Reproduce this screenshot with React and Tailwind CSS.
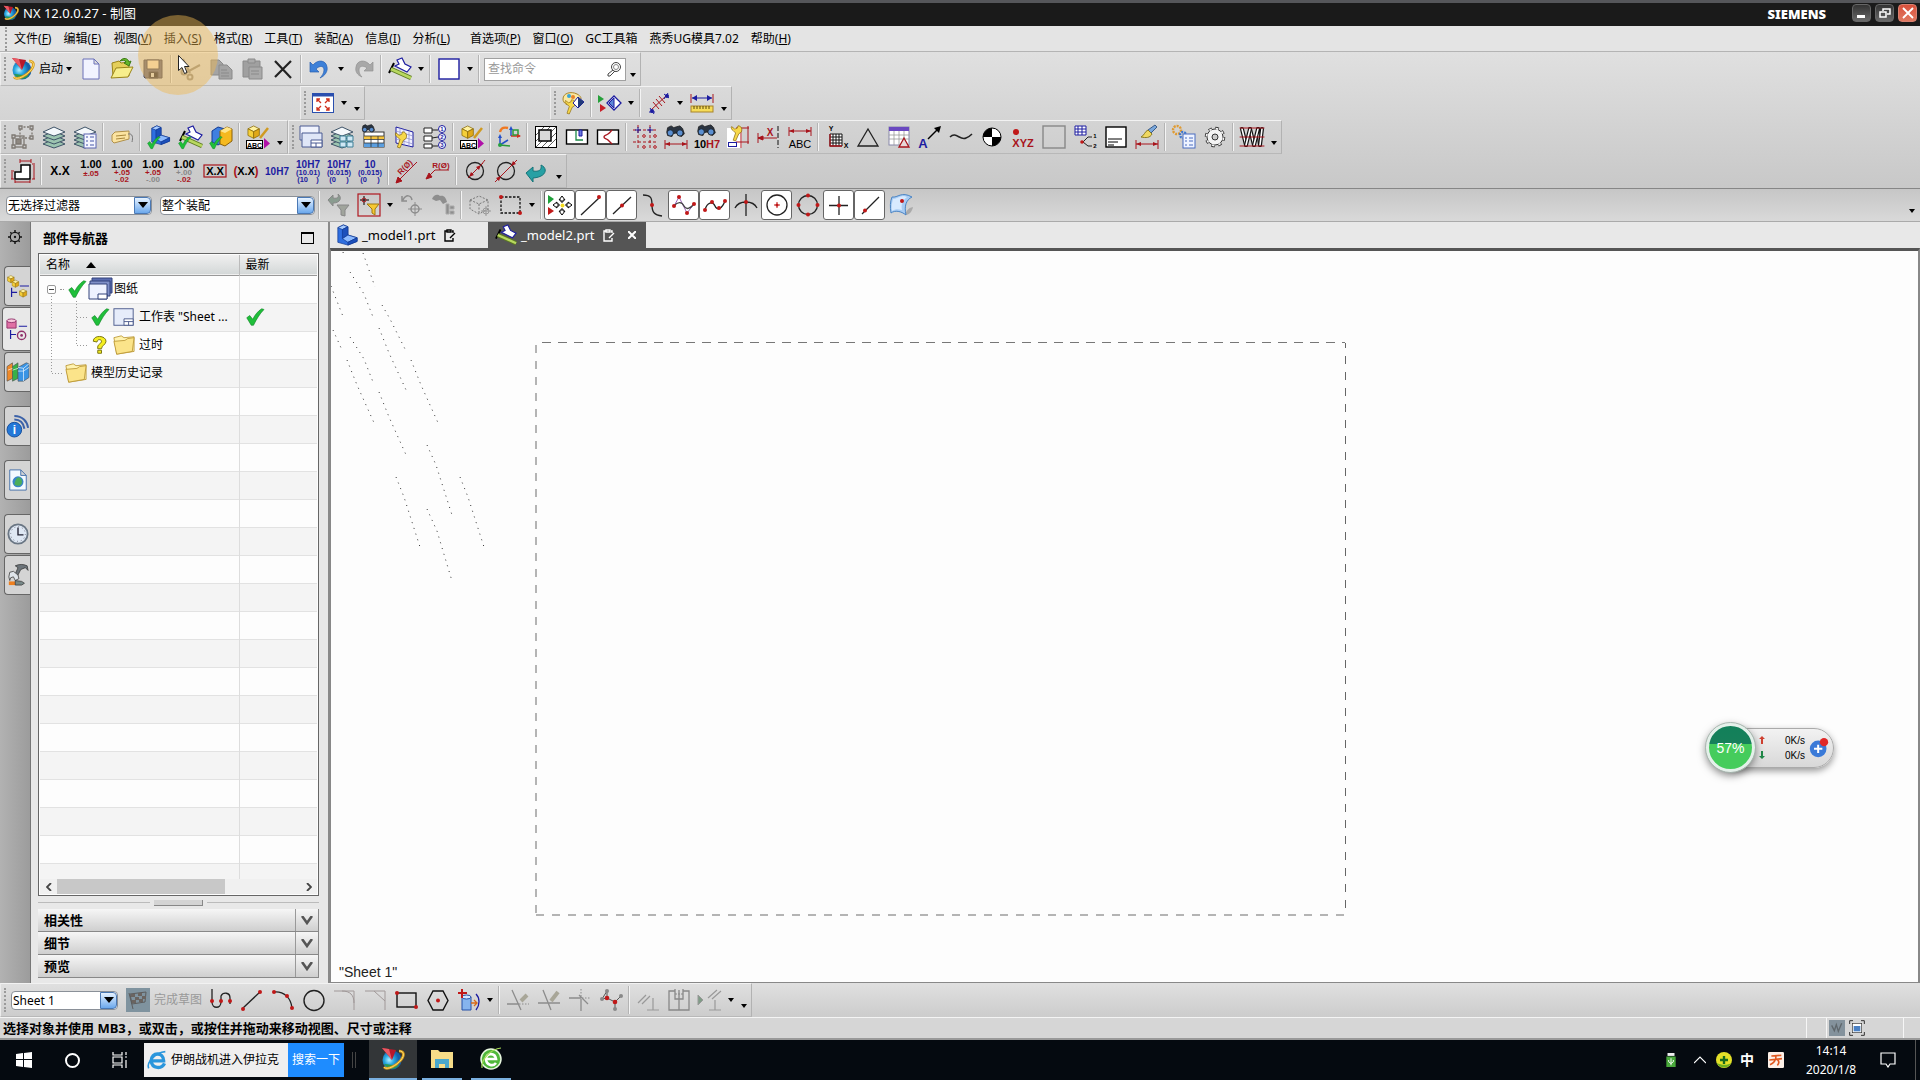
const RED = '#a8141c'
const BLUE = '#1c1ca0'

const Dot = ({ x, y, r = 2, c = '#c01818' }) => <circle cx={x} cy={y} r={r} fill={c} stroke="none" />

const T = ({ x = 12, y, s = 10, c = '#000', a = 'middle', w = 700, children }) => (
  <text x={x} y={y} fontSize={s} fontWeight={w} fill={c} stroke="none" textAnchor={a} fontFamily="Liberation Sans, sans-serif">
    {children}
  </text>
)

const Check = () => <path d="M1 13l4-3 4 5C12 9 16 4 21 1l3 1C18 8 14 15 10 23H7z" fill="#1fbf3a" stroke="#0c7f22" strokeWidth=".8" />

const Layers = () => (
  <g fill="#f4f8fb" stroke="#3f5468">
    {[19, 15, 11, 7].map((y) => (
      <path key={y} d={`M1 ${y}L12 ${y - 5}L23 ${y}L12 ${y + 4}Z`} fill={y > 7 ? '#9cc4b0' : '#f4f8fb'} />
    ))}
  </g>
)

const Sketch = () => (
  <g strokeWidth="1.2">
    <path d="M9 3l5-2 3 6 6 3-4 5L7 9l4-2z" fill="#fff" stroke={BLUE} />
    <path d="M6 6L1 16" stroke="#000" strokeWidth="2" />
    <path d="M3 12l20 9" stroke="#5d7a22" strokeWidth="4.5" />
    <path d="M3 12l20 9" stroke="#b8d860" strokeWidth="2.5" />
  </g>
)

const Block = () => (
  <g strokeWidth=".8" stroke="#123a94">
    <path d="M2 4l6-3 5 2v9l10 3v4l-10 4-11-3z" fill="#2f6fe0" />
    <path d="M2 4l6-3 5 2-6 3z" fill="#a8ccff" />
    <path d="M7 6l6-3v9l-6 4z" fill="#1c50bc" />
    <path d="M7 16l6-4 10 3-10 5z" fill="#8cbaff" />
    <path d="M13 20l10-5v4l-10 4z" fill="#1c50bc" />
  </g>
)

const Cube = ({ x = 0, y = 0, k = 1 }) => (
  <g transform={`translate(${x} ${y}) scale(${k})`} stroke="#8a6a08" strokeWidth=".8">
    <path d="M1 4l6-3 6 3-6 3z" fill="#fff2a0" />
    <path d="M1 4v7l6 3V7z" fill="#f5cf3a" />
    <path d="M13 4v7l-6 3V7z" fill="#e0a818" />
  </g>
)

const Binoculars = () => (
  <g stroke="#111" strokeWidth=".8">
    <path d="M3 3l4-2 3 2 3-1 4-1 3 3 2 6-3 3-4-1-2-3-4 1-1 3-5-1-1-4z" fill="#2b3440" />
    <ellipse cx="6" cy="9" rx="3.5" ry="3.5" fill="#5b8fd0" />
    <ellipse cx="17" cy="9" rx="3.5" ry="3.5" fill="#5b8fd0" />
  </g>
)

const HDim = ({ y = 18 }) => (
  <g stroke={RED} fill={RED}>
    <path d={`M1 ${y - 4}v9M23 ${y - 4}v9M1 ${y}H23`} />
    <path d={`M1 ${y}l5-2v4zM23 ${y}l-5-2v4z`} stroke="none" />
  </g>
)

const Wrench = ({ x = 0, y = 0, k = 1 }) => (
  <path
    transform={`translate(${x} ${y}) scale(${k})`}
    d="M2 2l4 3 3-1 1-3c4 0 6 4 4 8l-3 2-4 9-3-1 3-9-3-3c-2-1-3-3-2-5z"
    fill="#f7d84a"
    stroke="#8a6a10"
    strokeWidth=".9"
  />
)

const Folder = () => (
  <g stroke="#b89430" strokeWidth=".9">
    <path d="M1 4l8-2 3 2 11-1v16L4 22z" fill="#fff3b0" />
    <path d="M1 8l12-1 3-2 7-1-2 15-17 3z" fill="#fbe48a" />
  </g>
)

const SheetIcon = () => (
  <g stroke="#48588a">
    <rect x="1" y="3" width="21" height="18" fill="#e6ecfa" />
    <path d="M12 21v-7h10v7zM12 17h10M17 17v4" fill="#fff" />
  </g>
)

const NxLogo = () => (
  <g stroke="none">
    <circle cx="11" cy="13" r="9.5" fill="url(#globe)" />
    <path d="M3 17c4 6 12 6 15 1-5 1-9-1-15-1z" fill="#2a9a50" />
    <path d="M1 1l14 2-4 10z" fill="#b8182a" />
    <path d="M1 1l7 1 3 11z" fill="#ea5a64" />
    <path d="M18 4c5 0 6 4 2 9S6 24 3 20" stroke="#d89a18" strokeWidth="2.6" />
    <path d="M18 4c5 0 6 4 2 9S6 24 3 20" stroke="#f8dc70" strokeWidth="1" />
  </g>
)

const Search360 = () => (
  <g>
    <circle cx="12" cy="12" r="10" fill="#4fb83a" stroke="#e8f8e0" strokeWidth="1.5" />
    <path d="M17 16c-3 4-10 2-10-4s9-7 10 0H8" stroke="#fff" strokeWidth="2.6" />
    <path d="M3 21C2 12 12 2 22 1" stroke="#a9dc5a" strokeWidth="1.2" />
  </g>
)

const Tol = ({ a, b, ca = RED, cb = RED }) => (
  <>
    <T y={9} s={11}>1.00</T>
    <T y={b ? 16 : 17} s={8} c={ca}>{a}</T>
    {b && <T y={23} s={8} c={cb}>{b}</T>}
  </>
)

const icons = {
  new: <path d="M4 2h11l5 5v15H4zM15 2v5h5" fill="#f1f3ff" stroke="#6a70b8" />,
  open: (
    <g stroke="#9a8418">
      <path d="M2 6l7-2 2 2 8-1v14H3z" fill="#e5cf5a" />
      <path d="M1 21l5-10 17-1-5 10z" fill="#f7ee8c" />
      <path d="M10 4c3-4 8-3 9 1l2-1-2 5-5-3 2-1c-1-2-3-2-6-1z" fill="#63b52a" stroke="#3c7a14" />
    </g>
  ),
  save: (
    <g stroke="#4a4a60">
      <path d="M3 3h18v18H4l-1-1z" fill="#6c6c86" />
      <path d="M6 3h12v9H6z" fill="#f7e3c8" />
      <path d="M8 15h9v6H8z" fill="#333344" />
      <path d="M10 16h3v4h-3z" fill="#ddd" stroke="none" />
    </g>
  ),
  cut: (
    <g stroke="#98938a" strokeWidth="2">
      <path d="M5 2l7 14M22 8L9 15" />
      <circle cx="12" cy="20" r="2.5" />
      <circle cx="6" cy="15" r="2.5" />
    </g>
  ),
  copy: (
    <g fill="#a4a4a4" stroke="#8a8a8a">
      <path d="M2 3h8l4 4v11H2z" />
      <path d="M10 8h8l5 5v9H10zM12 13h6M12 16h8M12 19h8" />
    </g>
  ),
  paste: (
    <g fill="#a0a0a0" stroke="#8a8a8a">
      <path d="M3 4h17v16H3z" />
      <path d="M8 2h7v4H8zM9 10h13v12H9zM11 14h8M11 17h8" fill="#aaa" />
    </g>
  ),
  delete: <path d="M4 4l16 17M20 4L4 20" stroke="#222" strokeWidth="2.2" />,
  undo: <path d="M2 5v10h9l-3-3c4-4 8-3 8 1 0 3-2 6-4 8 5-2 8-7 7-11C18 3 10 2 5 8z" fill="#3d80d8" stroke="#2a60b0" strokeWidth=".7" />,
  redo: <path d="M22 5v9h-9l3-3c-4-3-8-2-8 2 0 3 1 5 3 7-5-2-7-6-6-10C6 3 14 2 19 8z" fill="#a8a8a8" stroke="#929292" strokeWidth=".7" />,
  sketch: <Sketch />,
  view: <rect x="2" y="2" width="20" height="20" fill="#fff" stroke={BLUE} strokeWidth="1.4" />,
  fit: (
    <g>
      <rect x="1.5" y="2.5" width="21" height="19" fill="#fff" stroke="#2a4fae" />
      <path d="M2 4h20" stroke="#2a4fae" strokeWidth="3" />
      <path d="M10 12L6 8m0 3V8h3M14 12l4-4m-3 0h3v3M10 15l-4 4m0-3v3h3M14 15l4 4m0-3v3h-3" stroke="#d0301c" strokeWidth="1.3" />
    </g>
  ),
  palette: (
    <g>
      <path d="M2 8C2 2 10 0 16 3c4 2 5 5 3 6l-5 1-2 4C6 15 2 12 2 8z" fill="#fbe9a0" stroke="#a8842a" />
      <Dot x={8} y={5} c="#39a4d8" />
      <Dot x={12} y={6} c="#e8822a" />
      <Wrench x={3} y={8} k={0.75} />
      <path d="M12 12l5-6 6 5-6 6z" fill="#fff" stroke={BLUE} />
      <path d="M17 6l6 5-6 6z" fill="#223a7a" />
    </g>
  ),
  section: (
    <g>
      <path d="M0 4l6 4-6 4z" fill="#26a03a" />
      <path d="M2 13l6 4-6 4z" fill="#c81e28" />
      <path d="M9 12l7-7 7 7-7 7z" fill="#fff" stroke={BLUE} strokeWidth="1.300" />
      <path d="M16 7v10l-5-5z" fill="#5c86d6" stroke={BLUE} />
    </g>
  ),
  centerline: (
    <g>
      <path d="M4 19L20 4" stroke={RED} />
      <path d="M6 11l6 7M9 8l6 7M12 5l6 7" stroke={RED} />
      <path d="M2 21h6M3 17l4 6M17 3l5 4M17 8l4-6" stroke={BLUE} />
      <Dot x={5} y={20} c={BLUE} />
      <Dot x={20} y={5} c={BLUE} />
    </g>
  ),
  measure: (
    <g>
      <path d="M1 3v9M23 3v9" stroke={RED} />
      <path d="M2 7h20" stroke={BLUE} />
      <path d="M2 7l5-3v6zM22 7l-5-3v6z" fill={BLUE} />
      <rect x="1" y="15" width="22" height="6" fill="#f6dc58" stroke="#a8842a" />
      <path d="M4 15v3M7 15v3M10 15v3M13 15v3M16 15v3M19 15v3" stroke="#5a4608" />
    </g>
  ),
  group: (
    <g stroke="#7d7872" strokeWidth="1.300">
      <rect x="9" y="2" width="12" height="11" strokeDasharray="2 1.5" />
      <rect x="2" y="11" width="11" height="11" />
      <path d="M5 14h5v5H5z" fill="#8d8780" />
      <path d="M8 1h3v3H8zM19 1h3v3h-3zM19 11h3v3h-3zM1 10h3v3H1zM1 20h3v3H1zM12 20h3v3h-3z" fill="#ccc" />
    </g>
  ),
  layers: <Layers />,
  layerlist: (
    <g>
      <Layers />
      <rect x="11" y="9" width="12" height="14" fill="#f4f6ff" stroke="#5a64b0" />
      <path d="M13 12h2M17 12h4M13 16h2M17 16h4M13 20h2M17 20h4" stroke="#4455a8" />
    </g>
  ),
  tag: (
    <g>
      <path d="M2 10l3-3 14-1v8L4 18l-2-2z" fill="#fbe3a0" stroke="#b0904a" />
      <path d="M6 11l10-1M6 14l9-1" stroke="#a8863a" />
      <path d="M18 9c5-1 5 4 4 8" stroke="#777" />
    </g>
  ),
  modeling: (
    <g>
      <g transform="translate(3 0) scale(.85)"><Block /></g>
      <g transform="translate(0 11) scale(.55)"><Check /></g>
    </g>
  ),
  drafting: (
    <g>
      <g transform="translate(1 0)"><Sketch /></g>
      <g transform="translate(0 11) scale(.55)"><Check /></g>
    </g>
  ),
  assembly: (
    <g>
      <path d="M3 6l6-4 7 2v12l-7 4-6-3z" fill="#3f7fe0" stroke="#123a94" />
      <path d="M11 6l7-4 5 2v12l-7 5-5-2z" fill="#f5b91f" stroke="#8a6008" />
      <path d="M11 6l7-4 5 2-7 4z" fill="#ffe58a" />
      <g transform="translate(0 11) scale(.55)"><Check /></g>
    </g>
  ),
  pmi: (
    <g>
      <Cube x={1} y={0} k={0.95} />
      <path d="M22 3L14 13" stroke="#d09a20" strokeWidth="2.5" />
      <rect x="0.5" y="15.500" width="16" height="8" fill="#fff" stroke="#000" />
      <T x={8.5} y={22.5} s={7}>ABC</T>
      <path d="M18 13l6 5.500-6 5z" fill="#b010a8" />
    </g>
  ),
  sheet: (
    <g stroke="#4a5a92">
      <path d="M1 1h19v14H1z" fill="#f0f3fd" />
      <path d="M3 8h20v14H3z" fill="#dfe6f7" />
      <path d="M12 22v-7h11v7zM12 18h11M17 18v4" fill="#fff" />
    </g>
  ),
  viewlayers: (
    <g>
      <Layers />
      <path d="M10 11h6v5h-6zM17 11h6v5h-6zM10 17h6v5h-6zM17 17h6v5h-6z" fill="#cfe8f4" stroke="#3f8098" />
    </g>
  ),
  findtable: (
    <g>
      <rect x="3" y="7" width="20" height="15" fill="#fff" stroke="#333" />
      <path d="M3 11h20v3H3z" fill="#f4c23a" />
      <path d="M3 18h20v4H3z" fill="#5b9fe0" />
      <path d="M3 11h20M3 14.500h20M3 18h20M10 11v11M17 11v11" stroke="#333" strokeWidth=".8" />
      <g transform="translate(0 -1) scale(.62)"><Binoculars /></g>
    </g>
  ),
  gridwrench: (
    <g>
      <path d="M4 2l17 5v15L4 18z" fill="#f1f1ff" stroke={BLUE} />
      <path d="M4 6l17 5M4 10l17 5M4 14l17 5M8 3v16M12 4v17M17 6v16" stroke="#8888cc" strokeWidth=".7" />
      <Wrench x={2} y={6} k={0.85} />
    </g>
  ),
  balloonlist: (
    <g stroke="#222">
      <path d="M1 3h8v5H1zM1 11h8v5H1zM1 19h8v4H1zM9 5h6M9 13l6-1M9 21h6" fill="#fff" />
      <g fill="#fff" stroke={BLUE}>
        <circle cx="19" cy="4" r="3.500" />
        <circle cx="19" cy="12" r="3.500" />
        <circle cx="19" cy="20" r="3.500" />
      </g>
      <T x={19} y={6} s={6} c={BLUE}>1</T>
      <T x={19} y={14} s={6} c={BLUE}>2</T>
      <T x={19} y={22} s={6} c={BLUE}>3</T>
    </g>
  ),
  orient: (
    <g strokeWidth="1.5">
      <path d="M3 20V11M3 20l8-5" stroke="#2450c8" />
      <path d="M3 20l10 1" stroke="#2a9a3a" />
      <path d="M14 3v8" stroke="#2450c8" />
      <path d="M14 11h9" stroke="#d03020" />
      <path d="M16 5h5v5h-5z" stroke="#2a9a3a" />
      <path d="M3 7c1-4 4-5 8-4" stroke="#f07820" strokeWidth="2.4" />
      <path d="M14 1l-2 4h4zM3 9l-2 4h4z" fill="#2450c8" stroke="none" />
      <path d="M24 11l-4-2v4z" fill="#d03020" stroke="none" />
      <Dot x={3} y={20} c="#28a040" />
    </g>
  ),
  hatch: (
    <g stroke="#000">
      <rect x="1.500" y="1.500" width="21" height="21" fill="#fff" />
      <path d="M2 10l8-8M2 16L16 2M2 22L22 2M8 22L22 8M14 22l8-8" stroke="#333" strokeWidth=".8" />
      <rect x="5" y="5" width="12" height="11" fill="#d8d8d8" strokeWidth="1.500" />
    </g>
  ),
  breakout: (
    <g>
      <rect x="1.500" y="5" width="21" height="14" fill="#fff" stroke="#000" strokeWidth="1.400" />
      <path d="M11 5v10h7" stroke="#1c8a48" strokeWidth="1.300" />
      <path d="M14 5h3v6h-3z" fill="#6a78e0" stroke={BLUE} />
    </g>
  ),
  breakview: (
    <g>
      <rect x="1.500" y="5" width="21" height="14" fill="#fff" stroke="#000" strokeWidth="1.400" />
      <path d="M16 5c-2 2-1 2-4 4s-4 1-4 3 2 1 4 3 2 2 4 4" stroke={RED} strokeWidth="1.400" />
    </g>
  ),
  centermarks: (
    <g stroke={RED}>
      <path d="M5 0v24M17 0v24M0 5h24M0 17h24" strokeDasharray="3 2" />
      <path d="M5 2v6M17 2v6M2 5h6M14 5h6" stroke={BLUE} />
      <g fill="#e8d8d8">
        <circle cx="11" cy="11" r="1.300" />
        <circle cx="22" cy="11" r="1.300" />
        <circle cx="11" cy="22" r="1.300" />
        <circle cx="22" cy="22" r="1.300" />
      </g>
    </g>
  ),
  finddim: (
    <g>
      <g transform="translate(1 0) scale(.88)"><Binoculars /></g>
      <HDim y={19} />
    </g>
  ),
  findfit: (
    <g>
      <g transform="translate(1 -1) scale(.88)"><Binoculars /></g>
      <T x={-1} y={23} s={11} a="start">10</T>
      <T x={25} y={23} s={11} a="end" c={RED}>H7</T>
    </g>
  ),
  dimwrench: (
    <g>
      <rect x="1" y="3" width="15" height="20" fill="#fff" stroke="none" />
      <path d="M15 3v20M22 1v18M10 3h13M10 17h13" stroke={RED} />
      <rect x="2.5" y="17.5" width="8" height="4" stroke={BLUE} />
      <Wrench x={4} y={0} k={0.8} />
    </g>
  ),
  dimx: (
    <g stroke={RED}>
      <path d="M1 8v10M1 13h19" />
      <path d="M1 13l5-2v4z" fill={RED} />
      <path d="M21 1v22" stroke="#111" strokeDasharray="5 2" />
      <T x={13} y={11} s={10} c={RED}>X</T>
    </g>
  ),
  dimtext: (
    <g>
      <HDim y={6} />
      <T x={12} y={23} s={11} w={400}>ABC</T>
    </g>
  ),
  ordinate: (
    <g>
      <path d="M5 9h12v12H5zM8 9v12M11 9v12M14 9v12M5 12h12M5 15h12M5 18h12" stroke="#111" fill="#fff" />
      <path d="M5 9v12h12" stroke={RED} strokeWidth="1.300" />
      <T x={6} y={6} s={7}>Y</T>
      <T x={21} y={23} s={7}>X</T>
    </g>
  ),
  triangle: <path d="M12 4L22 21H2z" stroke="#222" strokeWidth="1.300" />,
  symboltable: (
    <g>
      <rect x="2" y="2" width="20" height="18" fill="#fff" stroke="#8888aa" />
      <path d="M2 4h20" stroke="#6a48c0" strokeWidth="4" />
      <path d="M2 10h20M2 14h20M7 6v14M12 6v14M17 6v14" stroke="#999" strokeWidth=".8" />
      <path d="M17 13l5 9H12z" fill="#e8d8d8" stroke={RED} strokeWidth="1.300" />
    </g>
  ),
  note: (
    <g>
      <path d="M10 14L20 4" stroke="#000" strokeWidth="1.500" />
      <path d="M23 1l-2 7-5-5z" fill="#000" />
      <T x={5} y={23} s={13} c={BLUE}>A</T>
    </g>
  ),
  curve: <path d="M1 12c6-6 10 4 16 1 3-1 4-2 6-4" stroke="#222" strokeWidth="1.500" />,
  target: (
    <g>
      <circle cx="12" cy="12" r="9" fill="#fff" stroke="#000" />
      <path d="M12 3a9 9 0 0 0-9 9h9zM12 12h9a9 9 0 0 1-9 9z" fill="#000" />
    </g>
  ),
  xyz: (
    <g>
      <Dot x={5} y={7} r={3} />
      <T x={12} y={22} s={11} c={RED}>XYZ</T>
    </g>
  ),
  frame: <rect x="1" y="1" width="22" height="22" stroke="#888" strokeWidth="1.400" />,
  tableleader: (
    <g>
      <path d="M2 1h11v9H2zM2 4h11M2 7h11M5 1v9M9 1v9" fill="#fff" stroke={BLUE} />
      <path d="M10 17l5-5h4M10 17l5 4h4" stroke="#222" />
      <Dot x={9} y={17} r={1.8} />
      <T x={22} y={13} s={6}>1</T>
      <T x={22} y={23} s={6}>2</T>
    </g>
  ),
  titleblock: (
    <g>
      <rect x="2" y="2" width="20" height="20" fill="#fff" stroke="#000" strokeWidth="1.400" />
      <path d="M4 14h14M4 17h10M4 20h6" stroke="#000" />
    </g>
  ),
  brush: (
    <g>
      <path d="M20 0l2 2-6 6-3-3z" fill="#7aa8dc" stroke="#3c5c88" />
      <path d="M13 5l4 4c-2 4-6 4-11 3 3-1 4-6 7-7z" fill="#f0d860" stroke="#8a7a20" />
      <HDim y={19} />
    </g>
  ),
  gearlist: (
    <g>
      <circle cx="5" cy="5" r="4" stroke="#e09a30" strokeWidth="2.4" strokeDasharray="2 1" />
      <circle cx="11" cy="10" r="3" stroke="#3f78d0" strokeWidth="2.4" strokeDasharray="2 1" />
      <rect x="11" y="9" width="12" height="14" fill="#eef3ff" stroke="#4a6cc0" />
      <path d="M13 13h2M17 13h4M13 16h2M17 16h4M13 20h2M17 20h4" stroke="#4a6cc0" />
    </g>
  ),
  gear: (
    <g stroke="#333">
      <circle cx="12" cy="12" r="8.500" stroke="#333" strokeWidth="3.500" strokeDasharray="3.400 3.280" />
      <circle cx="12" cy="12" r="8" fill="#f4f4f4" />
      <circle cx="12" cy="12" r="8.500" stroke="#f4f4f4" strokeWidth="1.800" strokeDasharray="2.400 4.280" strokeDashoffset="-.5" />
      <circle cx="12" cy="12" r="3" fill="#ccc" />
    </g>
  ),
  spring: (
    <g strokeLinecap="round">
      <path d="M2 4l4 16M10 4l4 16M18 4l2 16" stroke="#111" strokeWidth="4" />
      <path d="M2 4l4 16M10 4l4 16M18 4l2 16" stroke="#fff" strokeWidth="1.600" />
      <path d="M10 4L6 20M18 4l-4 16M22 4l-2 16" stroke="#111" strokeWidth="4" />
      <path d="M10 4L6 20M18 4l-4 16M22 4l-2 16" stroke="#fff" strokeWidth="1.600" />
      <path d="M0 3h24M0 12h24M0 21h24" stroke={RED} />
    </g>
  ),
  shape: (
    <g>
      <path d="M10 6h9v14H4v-7h6z" fill="#fff" stroke="#000" strokeWidth="1.500" />
      <path d="M9 2h11M9 0v4M20 0v4M23 6v14M21 5h3M21 20h3M1 13v7M0 12h3M0 20h3M4 23h15M4 21v3M19 21v3" stroke={RED} />
    </g>
  ),
  xx: <T y={16} s={12}>X.X</T>,
  tol1: <Tol a="±.05" />,
  tol2: <Tol a="+.05" b="-.02" />,
  tol3: <Tol a="+.05" b="-.00" cb="#888" />,
  tol4: <Tol a="+.00" b="-.02" ca="#888" />,
  basic: (
    <g>
      <rect x="1" y="6" width="22" height="12" stroke={RED} strokeWidth="1.200" />
      <T y={16} s={11}>X.X</T>
    </g>
  ),
  ref: (
    <g>
      <T y={16} s={11}>X.X</T>
      <T x={1.5} y={16} s={12} c={RED}>(</T>
      <T x={22.5} y={16} s={12} c={RED}>)</T>
    </g>
  ),
  fit1: <T y={16} s={10} c={BLUE}>10H7</T>,
  fit2: (
    <g>
      <T y={9} s={10} c={BLUE}>10H7</T>
      <T y={16} s={7.5} c={BLUE}>(10.01)</T>
      <T y={23} s={7.5} c={BLUE}>(10 &nbsp; &nbsp;)</T>
    </g>
  ),
  fit3: (
    <g>
      <T y={9} s={10} c={BLUE}>10H7</T>
      <T y={16} s={7.5} c={BLUE}>(0.015)</T>
      <T y={23} s={7.5} c={BLUE}>(0 &nbsp; &nbsp; )</T>
    </g>
  ),
  fit4: (
    <g>
      <T y={9} s={10} c={BLUE}>10</T>
      <T y={16} s={7.5} c={BLUE}>(0.015)</T>
      <T y={23} s={7.5} c={BLUE}>(0 &nbsp; &nbsp; )</T>
    </g>
  ),
  radial1: (
    <g stroke={RED}>
      <path d="M2 23L22 3" />
      <path d="M1 24l2-6 4 4z" fill={RED} />
      <g transform="rotate(-45 9 10)"><T x={11} y={12} s={8} c={RED}>R(Ø)</T></g>
    </g>
  ),
  radial2: (
    <g stroke={RED}>
      <path d="M2 18l7-7h14" />
      <path d="M0 20l3-6 3 4z" fill={RED} />
      <T x={15} y={9} s={8} c={RED}>R(Ø)</T>
    </g>
  ),
  dia1: (
    <g>
      <circle cx="12" cy="12" r="8.500" stroke="#222" strokeWidth="1.300" />
      <path d="M5 19L20 4" stroke={RED} />
      <path d="M18 6l-2 5-3-3zM6 18l5-2-3-3z" fill={RED} />
      <path d="M18 6l4-5" stroke={RED} />
    </g>
  ),
  dia2: (
    <g>
      <circle cx="12" cy="12" r="8.500" stroke="#222" strokeWidth="1.300" />
      <path d="M1 23L23 1" stroke={RED} />
      <path d="M17 7l2-5 3 3zM7 17l-5 2 3 3z" fill={RED} />
    </g>
  ),
  back: <path d="M1 14l7-6v4c6 1 9-1 8-6 7 3 6 12-8 13v4z" fill="#27a0a4" stroke="#147478" />,
  filter1: (
    <g fill="#a0a49c" stroke="#888">
      <path d="M2 7l5-5v3c5 1 6-1 5-4 4 3 3 9-5 9v3z" fill="#8a9c90" />
      <path d="M11 12h12l-4 5v6l-4-1v-5z" />
    </g>
  ),
  filter2: (
    <g>
      <rect x="1" y="1" width="22" height="22" stroke="#b01820" strokeWidth="1.200" />
      <path d="M7 3v9M3 7h9" stroke="#000" />
      <circle cx="7" cy="7" r="2" stroke="#b01820" />
      <path d="M10 11h12l-4 5v6l-3-2v-4z" fill="#f6c832" stroke="#a07a10" />
    </g>
  ),
  undoview: (
    <g stroke="#8c8c8c" strokeWidth="1.500">
      <path d="M2 3v5h5M3 7c3-6 8-5 9 0" />
      <circle cx="15" cy="16" r="4" />
      <path d="M15 9v14M8 16h14" strokeWidth="1" />
    </g>
  ),
  findview: (
    <g fill="#8e8e8e">
      <path d="M1 6c2-5 6-5 8-3 4-1 6 2 7 6l-4 2-3-4-4 1z" />
      <path d="M15 11h3v10h-3zM19 13h4v3h-4zM19 18h4v3h-4z" stroke="#aaa" />
    </g>
  ),
  cubedash: (
    <g stroke="#777">
      <path d="M2 7l9-4 9 4v9l-9 5-9-5zM2 7l9 4 9-4M11 11v10" strokeDasharray="2 1.500" />
      <circle cx="18" cy="18" r="3" stroke="#999" />
      <path d="M18 13v10M13 18h10" stroke="#999" />
    </g>
  ),
  marquee: (
    <g>
      <rect x="2" y="4" width="19" height="16" stroke="#111" strokeWidth="1.300" strokeDasharray="2.500 1.500" />
      <Dot x={2} y={4} />
      <Dot x={21} y={20} />
    </g>
  ),
  snapmove: (
    <g>
      <path d="M0 2l6 4-6 5z" fill="#1fa03a" />
      <path d="M0 14l6 4-6 4z" fill="#c01818" />
      <path d="M14 3l3 4h-2v2h-2V7h-2zM14 22l3-4h-2v-2h-2v2h-2zM5 12l4-3v2h2v2H9v2zM24 12l-4-3v2h-2v2h2v2z" fill="#fff" stroke="#000" />
      <Dot x={14.5} y={12.5} r={2} c="#f4dc20" />
    </g>
  ),
  endpoint: (
    <g>
      <path d="M2 22L20 5" stroke="#222" strokeWidth="1.300" />
      <Dot x={20} y={4} />
    </g>
  ),
  midpoint: (
    <g>
      <path d="M3 21L21 4" stroke="#222" strokeWidth="1.300" />
      <Dot x={12} y={12.5} />
    </g>
  ),
  control: (
    <g>
      <path d="M2 2c8 0 9 3 9 10s2 10 10 11" stroke="#222" strokeWidth="1.300" />
      <Dot x={11} y={12} />
    </g>
  ),
  poles: (
    <g>
      <path d="M2 13L7 4l8 16 7-9" stroke="#9a60b8" />
      <path d="M2 13c4-5 8-4 10 0s6 3 10-2" stroke="#444" strokeWidth="1.300" />
      <Dot x={2} y={13} />
      <Dot x={7} y={4} />
      <Dot x={15} y={20} />
      <Dot x={22} y={11} />
    </g>
  ),
  spline: (
    <g>
      <path d="M2 17c2-8 8-9 10-4s7 3 10-5" stroke="#222" strokeWidth="1.300" />
      <Dot x={2} y={17} />
      <Dot x={9} y={9} />
      <Dot x={16} y={15} />
      <Dot x={22} y={8} />
    </g>
  ),
  intersect: (
    <g>
      <path d="M1 15c4-8 18-8 22 0M12 1v22" stroke="#222" strokeWidth="1.300" />
      <Dot x={12} y={9} />
    </g>
  ),
  arccenter: (
    <g>
      <circle cx="12" cy="12" r="10" stroke="#222" strokeWidth="1.300" />
      <path d="M12 9v6M9 12h6" stroke="#c01818" />
      <Dot x={12} y={12} r={1.500} />
    </g>
  ),
  quadrant: (
    <g>
      <circle cx="12" cy="12" r="9.500" stroke="#222" strokeWidth="1.300" />
      <Dot x={12} y={2.500} />
      <Dot x={12} y={21.500} />
      <Dot x={2.500} y={12} />
      <Dot x={21.500} y={12} />
    </g>
  ),
  point: (
    <g>
      <path d="M12 3v19M2 12.500h19" stroke="#222" strokeWidth="1.300" />
      <Dot x={12} y={12.500} />
    </g>
  ),
  oncurve: (
    <g>
      <path d="M4 21L21 4" stroke="#222" strokeWidth="1.300" />
      <Dot x={7} y={17.500} />
    </g>
  ),
  onface: (
    <g>
      <path d="M16 22c1-4 3-7 8-8-1 5-4 8-8 8z" fill="#aaa" />
      <path d="M3 4C9 5 12-2 23 4c-6 3-8 9-6 18-5-4-11-5-15-2-1-6-1-11 1-16z" fill="#a8ccf4" stroke="#4a84c4" />
      <path d="M4 6c5 0 8-5 14-2-5 4-6 8-5 13-4-1-7-1-10 1-1-4 0-8 1-12z" fill="#d8eaff" />
      <Dot x={13} y={8} />
    </g>
  ),
  profile: (
    <g>
      <path d="M3 1v13c0 7 9 7 9 0V8c2-4 9-4 9 2v6" stroke="#222" strokeWidth="1.300" />
      <Dot x={3} y={13} />
      <Dot x={12} y={13} />
      <Dot x={21} y={13} />
    </g>
  ),
  line: (
    <g>
      <path d="M3 20L20 4" stroke="#222" strokeWidth="1.300" />
      <Dot x={3} y={21} />
      <Dot x={20} y={4} />
    </g>
  ),
  arc: (
    <g>
      <path d="M3 4c10-1 17 6 18 16" stroke="#222" strokeWidth="1.300" />
      <Dot x={3} y={4} />
      <Dot x={16} y={8} />
      <Dot x={21} y={20} />
    </g>
  ),
  circle: <circle cx="12" cy="12.500" r="10" stroke="#222" strokeWidth="1.400" />,
  fillet: <path d="M1 3h20v19M9 3c8 0 12 4 12 12" stroke="#a09898" />,
  chamfer: <path d="M1 3h20v19M10 3l11 10" stroke="#a09898" />,
  rect: (
    <g>
      <rect x="2" y="5" width="19" height="14" stroke="#111" strokeWidth="1.400" />
      <Dot x={2} y={5} />
      <Dot x={21} y={19} />
    </g>
  ),
  polygon: (
    <g>
      <path d="M7 3h10l5 9.500L17 22H7l-5-9.500z" stroke="#111" strokeWidth="1.400" />
      <Dot x={12} y={12.500} />
    </g>
  ),
  pattern: (
    <g>
      <path d="M5 9h9v13H5z" fill="#86b4ee" stroke="#2450a8" />
      <ellipse cx="9.500" cy="9" rx="4.500" ry="2" fill="#d4e6ff" stroke="#2450a8" />
      <path d="M5 1v9M1 5h9" stroke="#c01818" strokeWidth="2" />
      <path d="M19 6c4 4 4 11 0 16" stroke={BLUE} strokeWidth="1.300" />
      <path d="M14 15h6M17 12l3 3-3 3" stroke="#d86a18" strokeWidth="1.300" />
    </g>
  ),
  trim: (
    <g stroke="#8c8c8c">
      <path d="M6 2l9 20M1 16h12" strokeWidth="1.300" />
      <path d="M13 16h10" strokeDasharray="1.500 1.500" />
      <path d="M15 13l6-6" stroke="#a8a698" strokeWidth="4" />
    </g>
  ),
  extend: (
    <g stroke="#8c8c8c">
      <path d="M6 2l8 20M1 15h22" strokeWidth="1.300" />
      <path d="M14 13l7-9" stroke="#a8a698" strokeWidth="4" />
    </g>
  ),
  corner: (
    <g stroke="#8c8c8c">
      <path d="M1 10h12M13 11v12M11 7l9 9" strokeWidth="1.300" />
      <path d="M13 1v9M14 10h9" strokeDasharray="1.500 1.500" />
    </g>
  ),
  movecurve: (
    <g stroke="#555">
      <path d="M3 11l5-8M3 11l5-1 8 4 6-6M16 14v7M8 3v7" />
      <Dot x={8} y={3} c="#888" />
      <Dot x={3} y={11} c="#888" />
      <Dot x={22} y={8} c="#888" />
      <Dot x={16} y={21} c="#888" />
      <Dot x={8} y={10} r={2.3} />
      <Dot x={16} y={14} r={2.3} />
    </g>
  ),
  constraint: <path d="M2 15l8-8M6 16l8-8M17 10v12M11 22h12" stroke="#999" strokeWidth="1.200" />,
  symmetric: (
    <g stroke="#888">
      <path d="M8 3H2v19h20V3h-6M8 1v10h8V1M12 2v20" strokeWidth="1.300" />
      <path d="M8 6h8" strokeDasharray="2 1" />
    </g>
  ),
  autocon: (
    <g stroke="#999">
      <path d="M0 7l5 5-5 5z" fill="#7f9c86" />
      <path d="M10 10l9-8M14 11l9-8M17 12v10M11 22h12" strokeWidth="1.200" />
    </g>
  ),
}

const Icon = ({ name, children, size = 'size-6' }) => (
  <svg viewBox="0 0 24 24" fill="none" className={`${size} shrink-0 overflow-visible`} aria-hidden="true">
    {children ?? icons[name]}
  </svg>
)

const Caret = ({ low }) => (
  <button aria-label="more" className={low ? 'flex h-full w-[14px] items-end justify-center pb-2' : 'flex h-full w-3 items-center justify-center'}>
    <svg viewBox="0 0 6 4" className="h-1 w-1.5"><path d="M0 0h6L3 4z" /></svg>
  </button>
)

const Sep = () => <span className="mx-[2px] h-7 w-[2px] border-l border-[#b4b4b4] border-r border-r-[#f4f4f4]" />

const Grip = () => <span className="ml-[3px] mr-px h-6 w-[2px] border-l-2 border-dotted border-[#9a9a9a]" />

const Tools = ({ items, active = [] }) =>
  items.split(' ').map((name, i) => {
    if (name === '|') return <Sep key={i} />
    if (name === 'v') return <Caret key={i} />
    if (name === '_') return <Caret key={i} low />
    const on = active.includes(name)
    return (
      <button
        key={i}
        aria-label={name}
        aria-pressed={on}
        className={`flex h-[30px] w-[31px] shrink-0 items-center justify-center ${on ? 'rounded-[3px] border border-[#666] bg-white' : ''}`}
      >
        <Icon name={name} />
      </button>
    )
  })

const Bar = ({ children, className = '' }) => (
  <div className={`flex h-[34px] items-center border-t border-l border-r border-b border-t-[#f2f2f2] border-l-[#ececec] border-r-[#b2b2b2] border-b-[#b8b8b8] ${className}`}>
    {children}
  </div>
)

const Select = ({ label, value, className }) => (
  <div className={`relative h-[19px] rounded-sm border border-[#8a9098] bg-white ${className}`}>
    <select aria-label={label} className="block h-full w-full appearance-none bg-transparent pl-px leading-[17px] outline-none">
      <option>{value}</option>
    </select>
    <span className="pointer-events-none absolute inset-y-0 right-0 flex w-[17px] items-center justify-center rounded-r-sm border border-[#4a78b4] bg-gradient-to-b from-[#e6f2ff] to-[#6ba8ec]">
      <svg viewBox="0 0 10 6" className="h-1.5 w-2.5"><path d="M0 0h10L5 6z" /></svg>
    </span>
  </div>
)

const menus = [
  ['文件', 'F'], ['编辑', 'E'], ['视图', 'V'], ['插入', 'S'], ['格式', 'R'], ['工具', 'T'], ['装配', 'A'], ['信息', 'I'],
  ['分析', 'L'], ['首选项', 'P'], ['窗口', 'O'], ['GC工具箱'], ['燕秀UG模具7.02'], ['帮助', 'H'],
]

const TitleBar = () => (
  <header className="flex h-[26px] shrink-0 items-center border-t-[3px] border-[#55565a] bg-[#1a1a1a] pb-[3px] text-white">
    <span className="ml-[3px] mr-1 flex"><Icon size="size-4"><NxLogo /></Icon></span>
    <h1 className="text-[13px]">NX 12.0.0.27 - 制图</h1>
    <span className="ml-auto mr-[26px] pt-[3px] text-[13px] font-black leading-none">SIEMENS</span>
    <div className="flex gap-1 pr-[3px]">
      <button aria-label="最小化" className="flex h-[18px] w-[19px] items-end rounded-sm border border-[#666] bg-gradient-to-b from-[#333] to-[#6a6a6a] pb-[3px] pl-1">
        <span className="h-[3px] w-2 bg-white" />
      </button>
      <button aria-label="还原" className="flex h-[18px] w-[19px] items-center justify-center rounded-sm border border-[#666] bg-gradient-to-b from-[#333] to-[#6a6a6a]">
        <svg viewBox="0 0 12 12" className="size-3" fill="none" stroke="#fff" strokeWidth="1.5"><path d="M1 5h6v5H1zM4 4V2h7v5H8" /></svg>
      </button>
      <button aria-label="关闭" className="flex h-[18px] w-[19px] items-center justify-center rounded-sm border border-[#d88070] bg-gradient-to-b from-[#d8503c] to-[#e07860]">
        <svg viewBox="0 0 12 12" className="size-3" stroke="#fff" strokeWidth="1.8"><path d="M1 1l10 10M11 1L1 11" /></svg>
      </button>
    </div>
  </header>
)

const MenuBar = () => (
  <nav className="flex h-[26px] shrink-0 items-center border-b border-[#b4b4b4] bg-[#e4e4e4] pl-[2px]">
    <Grip />
    {menus.map(([name, key]) => (
      <button key={name} className={`whitespace-nowrap px-1.5 ${name === '首选项' ? 'ml-2' : ''}`}>
        {name}
        {key && <>(<span className="underline">{key}</span>)</>}
      </button>
    ))}
  </nav>
)

const Toolbars = () => (
  <section className="shrink-0 border-b border-[#868686] bg-gradient-to-b from-[#e0e0e0] to-[#c8c8c8]">
    <div className="flex">
      <Bar>
        <Grip />
        <button className="flex items-center gap-1 pl-1">
          <Icon><NxLogo /></Icon>
          启动
        </button>
        <Tools items="v new open save | cut copy paste delete | undo v redo | sketch v | view v |" />
        <label className="ml-[2px] flex h-[23px] w-[142px] items-center border border-[#a0a0a0] bg-white px-[3px]">
          <input aria-label="查找命令" placeholder="查找命令" className="w-full min-w-0 bg-transparent outline-none placeholder:text-[#999]" />
          <svg viewBox="0 0 16 16" className="size-4 shrink-0" fill="none" stroke="#444">
            <circle cx="10" cy="6" r="4.500" />
            <circle cx="10" cy="6" r="2.500" stroke="#888" />
            <path d="M7 9l-5 4v2h2l5-5" />
          </svg>
        </label>
        <Caret low />
      </Bar>
    </div>
    <div className="flex">
      <Bar className="ml-[300px]">
        <Grip />
        <Tools items="fit v _" />
      </Bar>
      <Bar className="ml-[185px]">
        <Grip />
        <Tools items="palette | section v | centerline v measure _" />
      </Bar>
    </div>
    <div className="flex">
      <Bar>
        <Grip />
        <Tools items="group layers layerlist | tag | modeling drafting assembly | pmi _" />
      </Bar>
      <Bar>
        <Grip />
        <Tools items="sheet viewlayers findtable gridwrench balloonlist | pmi | orient | hatch breakout breakview | centermarks finddim findfit dimwrench dimx dimtext | ordinate triangle symboltable note curve target xyz frame tableleader titleblock brush | gearlist gear | spring _" />
      </Bar>
    </div>
    <div className="flex">
      <Bar>
        <Grip />
        <Tools items="shape | xx tol1 tol2 tol3 tol4 basic ref fit1 fit2 fit3 fit4 | radial1 radial2 | dia1 dia2 back _" />
      </Bar>
    </div>
  </section>
)

const SelectionBar = () => (
  <section className="flex h-[33px] shrink-0 items-center border-b border-[#aaa] bg-gradient-to-b from-[#c6c6c6] to-[#d9d9d9] pl-1.5">
    <Select label="选择过滤器" value="无选择过滤器" className="w-[146px]" />
    <Select label="选择范围" value="整个装配" className="ml-2 mr-px w-[155px]" />
    <Tools
      items="| filter1 filter2 v undoview findview | cubedash marquee v | snapmove endpoint midpoint control poles spline intersect arccenter quadrant point oncurve onface"
      active={['snapmove', 'endpoint', 'midpoint', 'poles', 'spline', 'arccenter', 'point', 'oncurve']}
    />
    <span className="ml-auto flex h-full items-center pr-px"><Caret low /></span>
  </section>
)

const resourceTabs = [
  ['装配导航器', 'mt-5', (
    <g>
      <Cube x={0} y={0} k={0.6} />
      <Cube x={5} y={5} k={0.6} />
      <Cube x={13} y={15} k={0.65} />
      <path d="M5 14v10M5 19h6M14 12h10" stroke={BLUE} strokeWidth="1.300" />
    </g>
  )],
  ['部件导航器', 'mt-px', (
    <g>
      <path d="M1 3h10v8H1z" fill="#e070a4" stroke="#90306a" />
      <ellipse cx="6" cy="3" rx="5" ry="2" fill="#f8c8dc" stroke="#90306a" />
      <path d="M5 13v10M5 18h6M14 9h9" stroke={BLUE} strokeWidth="1.300" />
      <circle cx="17" cy="19" r="4.500" stroke="#90306a" strokeWidth="1.500" />
      <Dot x={17} y={19} r={1.500} c="#90306a" />
    </g>
  )],
  ['重用库', 'mt-px', (
    <g stroke="#555" strokeWidth=".7">
      <path d="M0 6l6-4v17l-6 3z" fill="#ef8a2a" />
      <path d="M6 6l6-4v17l-6 3z" fill="#38b048" />
      <path d="M12 7l9-5 3 1v15l-6 4h-6z" fill="#3a94e4" />
      <path d="M12 7l6 1v14M18 8l6-5M1 10l5-2M6 10l6-2M12 11h6l6-4" stroke="#fff" />
    </g>
  )],
  ['HD3D', 'mt-[14px]', (
    <g>
      <circle cx="8" cy="16" r="8" fill="#2478d8" stroke="#124a98" />
      <T x={8} y={21} s={13} c="#fff">i</T>
      <path d="M8 5c6 0 10 4 11 10M8 1c9 0 14 6 15 13" stroke="#3c62a8" strokeWidth="2.200" />
    </g>
  )],
  ['Web', 'mt-[14px]', (
    <g>
      <path d="M3 1h12l6 6v16H3zM15 1v6h6" fill="#f4faff" stroke="#3f6ca8" />
      <circle cx="12" cy="14" r="6" fill="#3a86c8" />
      <path d="M8 17c1-4 2-8 5-8 3 1 4 4 3 7-2 3-5 3-8 1z" fill="#4cae5a" />
    </g>
  )],
  ['历史记录', 'mt-[14px]', (
    <g>
      <circle cx="12" cy="12" r="10.500" fill="#dfe8f4" stroke="#6a7684" strokeWidth="2" />
      <circle cx="12" cy="12" r="8" stroke="#667" strokeDasharray="1 3.190" />
      <path d="M12 5v8h6" stroke="#223" strokeWidth="1.500" />
    </g>
  )],
  ['角色', 'mt-px', (
    <g>
      <path d="M9 2c4-2 9-2 13 0l1 5-3-3-5 2-4 8-3-1 4-9z" fill="#6c747a" stroke="#333" strokeWidth=".8" />
      <path d="M3 9l4-1 5 4 1 4-4 2-2-4-3 1-1 3-1-4z" fill="#dfe5ea" stroke="#444" strokeWidth=".9" />
      <path d="M2 19h7v4H2z" fill="#ee8020" />
      <path d="M9 18l7 1 3 2-3 2H9z" fill="#788" stroke="#333" strokeWidth=".8" />
    </g>
  )],
]

const ResourceBar = () => (
  <aside className="flex w-[31px] shrink-0 flex-col items-end border-r border-[#777] bg-gradient-to-r from-[#b2b2b2] to-[#9c9c9c]">
    <button aria-label="资源条选项" className="mr-2 mt-1.5 flex h-[18px] items-center">
      <Icon size="size-[14px]">
        <circle cx="12" cy="12" r="8" stroke="#111" strokeWidth="2" />
        <circle cx="12" cy="12" r="2" fill="#111" />
        <path d="M12 0v4M12 20v4M0 12h4M20 12h4M4 4l2 2M18 18l2 2M4 20l2-2M18 6l2-2" stroke="#111" strokeWidth="2.500" />
      </Icon>
    </button>
    {resourceTabs.map(([name, gap, art], i) => (
      <button
        key={name}
        aria-label={name}
        className={`flex items-center justify-center rounded-l border border-r-0 border-[#666] ${gap} ${i === 1 ? 'h-[44px] w-7 bg-[#e8e8e8]' : 'h-10 w-[26px] bg-[#d4d4d4]'}`}
      >
        <Icon size="size-[22px]">{art}</Icon>
      </button>
    ))}
  </aside>
)

const TreeRows = () => (
  <>
    <tr className="h-7 border-b border-[#e2e2e2]">
      <td className="border-r border-[#ddd] p-0">
        <div className="flex items-center pl-[7px]">
          <button aria-label="折叠" className="flex size-[9px] items-center justify-center rounded-[2px] border border-[#999] bg-white">
            <span className="h-px w-[5px] bg-[#444]" />
          </button>
          <span className="mx-1 w-1 border-t border-dotted border-[#999]" />
          <Icon size="size-[18px]"><Check /></Icon>
          <span className="mx-[2px] flex">
            <Icon>
              <path d="M4 1h20v15H4z" fill="#5a6cb0" stroke="#33427a" />
              <path d="M2 4h20v15H2z" fill="#8090c8" stroke="#33427a" />
              <path d="M1 7h18v15H1z" fill="#eef2ff" stroke="#33427a" />
              <path d="M10 22v-5h9v5z" fill="#fff" stroke="#33427a" />
            </Icon>
          </span>
          图纸
        </div>
      </td>
      <td />
    </tr>
    <tr className="h-7 border-b border-[#e2e2e2] bg-[#f4f4f4]">
      <td className="border-r border-[#ddd] p-0">
        <div className="flex items-center whitespace-nowrap pl-[51px]">
          <Icon size="size-[18px]"><Check /></Icon>
          <span className="mx-1 flex"><Icon size="size-[22px]"><SheetIcon /></Icon></span>
          工作表 "Sheet ...
        </div>
      </td>
      <td className="p-0"><span className="flex pl-1.5"><Icon size="size-[18px]"><Check /></Icon></span></td>
    </tr>
    <tr className="h-7 border-b border-[#e2e2e2]">
      <td className="border-r border-[#ddd] p-0">
        <div className="flex items-center pl-[51px]">
          <Icon size="size-[18px]">
            <path d="M3 7C3-2 20-1 20 7c0 5-6 5-6 10H9c-1-7 5-6 5-10 0-3-6-3-6 1zM9 19h5v4H9z" fill="#f4ee20" stroke="#7a7410" strokeWidth="1.300" />
          </Icon>
          <span className="mx-1 flex"><Icon size="size-[22px]"><Folder /></Icon></span>
          过时
        </div>
      </td>
      <td />
    </tr>
    <tr className="h-7 border-b border-[#e2e2e2] bg-[#f4f4f4]">
      <td className="border-r border-[#ddd] p-0">
        <div className="flex items-center gap-1 pl-[25px]">
          <Icon size="size-[22px]"><Folder /></Icon>
          模型历史记录
        </div>
      </td>
      <td />
    </tr>
    {Array.from({ length: 24 }, (_, i) => (
      <tr key={i} className="h-7 border-b border-[#e2e2e2] even:bg-[#f4f4f4]">
        <td className="border-r border-[#ddd]" />
        <td />
      </tr>
    ))}
  </>
)

const PartNavigator = () => (
  <section className="flex w-[299px] shrink-0 flex-col border-r-2 border-[#8a8a8a] bg-[#e8e8e8] pb-[5px] pl-[7px] pr-[9px]">
    <div className="flex h-[31px] shrink-0 items-center justify-between px-[5px]">
      <h2 className="text-[13px] font-bold">部件导航器</h2>
      <button aria-label="最大化" className="h-[12px] w-[13px] border border-t-2 border-black" />
    </div>
    <div className="flex min-h-0 flex-1 flex-col border border-[#666] bg-[#fdfdfd] p-px">
      <div className="relative min-h-0 flex-1 overflow-hidden">
        <table className="w-full table-fixed border-collapse">
          <thead>
            <tr className="h-5 border-b border-[#999] bg-gradient-to-b from-[#f0f0f0] to-[#d4d8d8] text-left">
              <th className="w-[199px] border-r border-[#bbb] p-0 pl-1.5 font-normal leading-[19px]">
                <span className="flex items-center gap-4">
                  名称
                  <svg viewBox="0 0 10 6" className="h-1.5 w-2.5"><path d="M0 6h10L5 0z" /></svg>
                </span>
              </th>
              <th className="p-0 pl-1.5 font-normal leading-[19px]">最新</th>
            </tr>
          </thead>
          <tbody>
            <TreeRows />
          </tbody>
        </table>
        <svg className="pointer-events-none absolute left-0 top-0 h-40 w-16" fill="none" stroke="#999" strokeDasharray="1 2">
          <path d="M11.500 41V118.500H23M36.500 46V90.500H47M37 62.500H47" />
        </svg>
      </div>
      <div className="flex h-[15px] shrink-0 items-center bg-[#f0f0f0]">
        <button aria-label="向左" className="flex w-[17px] justify-center">
          <svg viewBox="0 0 6 8" className="h-2 w-1.5" fill="none" stroke="#444" strokeWidth="1.8"><path d="M5 0L1 4l4 4" /></svg>
        </button>
        <div className="flex h-full flex-1"><span className="h-full w-[69%] bg-[#c8c8c8]" /></div>
        <button aria-label="向右" className="flex w-[17px] justify-center">
          <svg viewBox="0 0 6 8" className="h-2 w-1.5" fill="none" stroke="#444" strokeWidth="1.8"><path d="M1 0l4 4-4 4" /></svg>
        </button>
      </div>
    </div>
    <div className="flex h-[13px] shrink-0 items-center gap-1">
      <span className="h-px flex-1 bg-[#bbb]" />
      <span className="h-1.5 w-[49px] border-b border-r border-[#888] bg-[#d4d4d4]" />
      <span className="h-px flex-1 bg-[#bbb]" />
    </div>
    {['相关性', '细节', '预览'].map((name) => (
      <button key={name} className="flex h-[23px] shrink-0 items-stretch border-b border-r border-[#888] bg-gradient-to-b from-[#f6f6f6] to-[#cfcfcf] text-left text-[13px] font-bold">
        <span className="flex-1 border-r border-[#999] pl-1.5 leading-[23px]">{name}</span>
        <span className="flex w-[22px] items-center justify-center">
          <svg viewBox="0 0 12 9" className="h-[9px] w-3" fill="none" stroke="#555" strokeWidth="2.600"><path d="M1 0l5 7 5-7" /></svg>
        </span>
      </button>
    ))}
  </section>
)

const Clip = () => (
  <svg viewBox="0 0 12 13" className="h-[13px] w-3" fill="none" stroke="currentColor" strokeWidth="1.400">
    <path d="M3 2H1v10h8V9M8 2h1v2M3 1h4v2H3zM6 9l5-5" />
  </svg>
)

const ghostLines = [
  'M12 1l1 4', 'M32 2l12 34', 'M19 21l14 22 9 23', 'M0 35l13 33', 'M51 54l8 14 15 30', 'M48 77l10 25 18 39', 'M2 79l9 20',
  'M19 86l14 22 9 23', 'M80 109l10 25 18 40', 'M16 109l10 25 18 40', 'M48 141l10 25 18 40', 'M96 194l9 20 16 50',
  'M65 226l8 20 16 50', 'M129 226l8 20 16 50', 'M96 258l10 22 15 50',
]

const Graphics = () => (
  <main className="flex min-w-0 flex-1 flex-col">
    <div className="flex h-[26px] shrink-0 bg-[#e8e8e8] text-[13px]">
      <button className="flex w-[158px] items-center pl-1.5">
        <Icon size="size-[22px]"><Block /></Icon>
        <span className="ml-1 mr-[9px]">_model1.prt</span>
        <Clip />
      </button>
      <div className="flex w-[158px] items-center bg-[#555] pl-[7px] text-white">
        <Icon size="size-[22px]"><Sketch /></Icon>
        <span className="ml-1 mr-[9px]">_model2.prt</span>
        <Clip />
        <button aria-label="关闭标签" className="ml-[13px]">
          <svg viewBox="0 0 8 8" className="size-2" stroke="#fff" strokeWidth="2"><path d="M0 0l8 8M8 0L0 8" /></svg>
        </button>
      </div>
    </div>
    <div className="relative flex min-h-0 flex-1 items-end border-b border-l border-r-2 border-t-[3px] border-[#888] border-t-[#555] bg-[#fdfdfd]">
      <svg className="absolute inset-0 h-full w-full" fill="none">
        <path d="M205 91.500H1014" stroke="#777" strokeDasharray="9 7" strokeDashoffset="-6" />
        <path d="M1014.500 92V664" stroke="#666" strokeDasharray="8 8" strokeDashoffset="3" />
        <path d="M205 664H1014" stroke="#b4b4b4" strokeWidth="2" strokeDasharray="8 8" />
        <path d="M205 92V664" stroke="#b4b4b4" strokeWidth="2" strokeDasharray="8 8" strokeDashoffset="-2" />
        <g stroke="#333" strokeDasharray="1 5">
          {ghostLines.map((d) => <path key={d} d={d} />)}
        </g>
      </svg>
      <p className="relative pl-2 font-['Liberation_Sans',sans-serif] text-[14px] leading-5 text-[#222]">"Sheet 1"</p>
      <div className="absolute right-[84px] top-[472px] flex items-center">
        <span className="z-10 flex size-[49px] items-center justify-center rounded-full border-[3px] border-[#e4f0ea] bg-[linear-gradient(#12805a_0%,#17805a_42%,#45cc5c_43%,#45cc5c_100%)] font-['Liberation_Sans',sans-serif] text-[14px] text-white shadow-[0_3px_8px_rgba(0,0,0,.5)] outline outline-[#a8b8b0]">
          57%
        </span>
        <div className="-ml-6 flex h-10 w-[103px] items-center rounded-r-full border border-[#aaa] bg-gradient-to-b from-[#f2f2f2] to-[#d8d8d8] pl-[27px] shadow-[0_3px_7px_rgba(0,0,0,.4)]">
          <div className="flex w-[46px] flex-col font-['Liberation_Sans',sans-serif] text-[10px] leading-[15px]">
            <span className="flex items-center justify-between">
              <svg viewBox="0 0 6 8" className="h-2 w-1.5" fill="#d04030"><path d="M3 0l3 3H4v5H2V3H0z" /></svg>
              0K/s
            </span>
            <span className="flex items-center justify-between">
              <svg viewBox="0 0 6 8" className="h-2 w-1.5" fill="#208848"><path d="M3 8l3-3H4V0H2v5H0z" /></svg>
              0K/s
            </span>
          </div>
          <button aria-label="加速" className="ml-1 flex">
            <Icon size="size-[20px]">
              <circle cx="11" cy="13" r="10" fill="#3a7ad8" />
              <path d="M11 8v10M6 13h10" stroke="#fff" strokeWidth="2.400" />
              <circle cx="18" cy="5" r="5" fill="#e02828" />
            </Icon>
          </button>
        </div>
      </div>
    </div>
  </main>
)

const SketchBar = () => (
  <section className="flex shrink-0 bg-gradient-to-b from-[#e0e0e0] to-[#cccccc]">
    <Bar>
      <Grip />
      <Select label="图纸页" value="Sheet 1" className="ml-1 w-[107px]" />
      <button className="ml-2 mr-[3px] flex items-center gap-1 whitespace-nowrap text-[#999]">
        <Icon>
          <rect width="24" height="24" fill="#7f939f" />
          <path d="M3 5l4 16M4 6l16-2-1 10-13 2z" stroke="#5c5c5c" />
          <path d="M5 6h4v3H5zM12 5h4v3h-4zM9 9h4v3H9zM16 8h4v3h-4zM6 12h4v3H6zM13 11h4v3h-4z" fill="#6a6460" />
        </Icon>
        完成草图
      </button>
      <Tools items="profile line arc circle fillet chamfer rect polygon pattern v | trim extend corner movecurve | constraint symmetric autocon v _" />
    </Bar>
  </section>
)

const StatusBar = () => (
  <section className="flex h-[23px] shrink-0 items-center border-b-2 border-t border-b-[#999] border-t-[#f4f4f4] bg-[#d6d6d6]">
    <p className="flex-1 pl-[3px] text-[13px] font-bold leading-5">选择对象并使用 MB3，或双击，或按住并拖动来移动视图、尺寸或注释</p>
    <div className="flex h-full items-center">
      <span className="h-full w-5 border-l border-[#f6f6f6]" />
      <span className="flex h-full w-[77px] items-center gap-1 border-l border-[#f6f6f6] pl-[2px]">
        <Icon size="size-4">
          <rect width="24" height="24" fill="#84929c" />
          <path d="M4 8l4 8 3-9 3 10 5-12" stroke="#5f676c" strokeWidth="2" />
        </Icon>
        <Icon size="size-4">
          <path d="M1 6V1h5M18 1h5v5M23 18v5h-5M6 23H1v-5" stroke="#333" strokeWidth="1.500" />
          <rect x="5" y="5" width="14" height="14" fill="#fff" stroke="#333" />
          <path d="M7 9h10v8H7z" fill="#4a80c4" />
        </Icon>
      </span>
      <span className="h-full w-[17px] border-l border-[#f6f6f6]" />
    </div>
  </section>
)

const Taskbar = () => (
  <footer className="flex h-10 shrink-0 items-stretch bg-[#050a10] text-white">
    <button aria-label="开始" className="flex w-12 items-center justify-center">
      <svg viewBox="0 0 16 16" className="size-4" fill="#fff"><path d="M0 2l7-1v6H0zM8 1l8-1v7H8zM0 8h7v7l-7-1zM8 8h8v8l-8-1z" /></svg>
    </button>
    <button aria-label="Cortana" className="flex w-12 items-center justify-center">
      <span className="size-[15px] rounded-full border-2 border-white" />
    </button>
    <button aria-label="任务视图" className="flex w-12 items-center justify-center">
      <svg viewBox="0 0 16 16" className="size-4" fill="none" stroke="#fff" strokeWidth="1.200">
        <path d="M1 0v3h9V0M1 5h9v6H1zM1 16v-3h9v3M14 0v3M14 8v8M13 5h2" />
      </svg>
    </button>
    <div className="my-[3px] flex items-center text-[12px]">
      <div className="flex h-full w-36 items-center gap-1 bg-[#efefef] pl-[3px] text-black">
        <Icon size="size-[20px]">
          <path d="M21 16c-3 7-15 7-16-3C5 2 20 2 20 13H6" stroke="#2a96dc" strokeWidth="4" />
          <path d="M2 22C-1 15 10 3 22 2" stroke="#2a96dc" strokeWidth="2" />
        </Icon>
        <span className="whitespace-nowrap">伊朗战机进入伊拉克</span>
      </div>
      <button className="h-full w-14 bg-[#1e8cff]">搜索一下</button>
    </div>
    <span className="my-3 ml-2 mr-[13px] w-1 border-x border-[#444]" />
    <button aria-label="NX" className="flex w-12 items-center justify-center border-b-2 border-[#7ab0e0] bg-[#333638]">
      <Icon><NxLogo /></Icon>
    </button>
    <button aria-label="文件资源管理器" className="mx-[5px] flex w-10 items-center justify-center border-b-2 border-[#7ab0e0]">
      <Icon>
        <path d="M1 3h7l2 2h13v16H1z" fill="#f6dc88" />
        <path d="M5 12h14v9h-4v-4H9v4H5z" fill="#4aa8cc" />
      </Icon>
    </button>
    <button aria-label="浏览器" className="ml-1 flex w-10 items-center justify-center border-b-2 border-[#7ab0e0]">
      <Icon><Search360 /></Icon>
    </button>
    <div className="ml-auto flex items-center">
      <Icon size="size-[14px]">
        <path d="M6 0h12v5H6z" fill="#eee" />
        <path d="M4 6h16v18H4z" fill="#48a83a" />
        <path d="M12 9v12M8 12v3l4 3 4-3v-3" stroke="#fff" strokeWidth="1.600" />
      </Icon>
      <svg viewBox="0 0 12 8" className="ml-4 mr-[10px] h-2 w-3" fill="none" stroke="#fff" strokeWidth="1.200"><path d="M0 7l6-6 6 6" /></svg>
      <Icon size="size-4">
        <circle cx="12" cy="12" r="12" fill="#e4e028" />
        <path d="M1 16A12 12 0 0 0 23 16C18 20 8 20 1 16z" fill="#6cae20" />
        <path d="M12 6v12M6 12h12" stroke="#176a1c" strokeWidth="3.500" />
      </Icon>
      <span className="ml-2 text-[14px] font-bold">中</span>
      <span className="ml-[14px] flex">
        <Icon size="size-4">
          <rect width="24" height="24" rx="2" fill="#fdf0e8" />
          <path d="M5 6l15-1M2 12l19-2M12 6c0 6-4 11-9 13M14 11c3 3 3 6 0 9" stroke="#e05820" strokeWidth="2.400" />
        </Icon>
      </span>
      <time className="ml-5 w-[54px] text-center text-[12px] leading-[19px]">
        14:14
        <br />
        2020/1/8
      </time>
      <button aria-label="通知" className="ml-[22px] mr-[19px] flex">
        <svg viewBox="0 0 16 16" className="size-4" fill="none" stroke="#fff" strokeWidth="1.200"><path d="M1 1h14v11h-5l-2 3-2-3H1z" /></svg>
      </button>
      <span className="h-full w-[5px] border-l border-[#555]" />
    </div>
  </footer>
)

const Pointer = () => (
  <div className="pointer-events-none absolute left-[138px] top-[15px] size-20 rounded-full bg-[#f0b850]/45">
    <svg viewBox="0 0 12 19" className="absolute left-10 top-10 h-[19px] w-3" fill="#fff" stroke="#222">
      <path d="M.5.500v15l3.500-3 2.500 6 2.500-1-2.500-6H11z" />
    </svg>
  </div>
)

export default function App() {
  return (
    <div className="relative flex h-screen flex-col overflow-hidden bg-[#d6d6d6] font-['Noto_Sans','Noto_Sans_CJK_SC',sans-serif] text-[12px] leading-4 text-black">
      <svg className="absolute size-0" aria-hidden="true">
        <radialGradient id="globe" cx=".35" cy=".5">
          <stop offset="0" stopColor="#b8f0ff" />
          <stop offset=".5" stopColor="#28a8e0" />
          <stop offset="1" stopColor="#1460a8" />
        </radialGradient>
      </svg>
      <TitleBar />
      <MenuBar />
      <Toolbars />
      <SelectionBar />
      <div className="flex min-h-0 flex-1">
        <ResourceBar />
        <PartNavigator />
        <Graphics />
      </div>
      <SketchBar />
      <StatusBar />
      <Taskbar />
      <Pointer />
    </div>
  )
}
